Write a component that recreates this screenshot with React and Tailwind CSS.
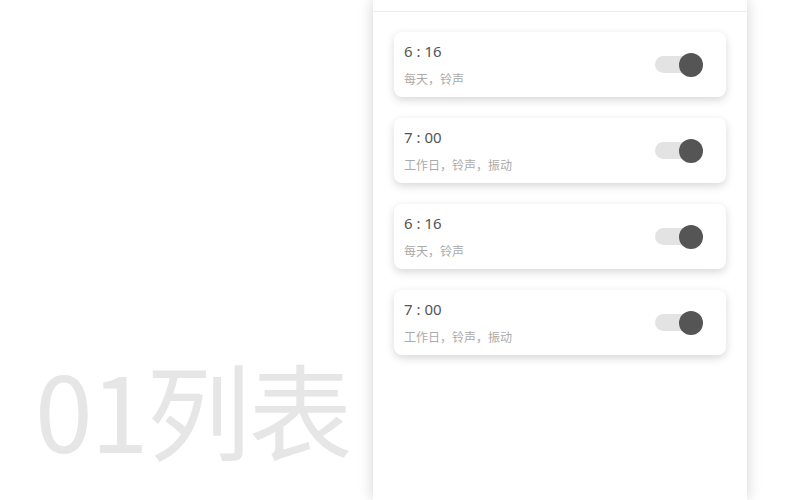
const alarms = [
  { time: '6 : 16', desc: '每天，铃声' },
  { time: '7 : 00', desc: '工作日，铃声，振动' },
  { time: '6 : 16', desc: '每天，铃声' },
  { time: '7 : 00', desc: '工作日，铃声，振动' },
];

function Toggle() {
  return (
    <div className="relative w-[48px] h-[24px] flex items-center">
      <div className="w-[40px] h-[17px] rounded-full bg-[#e3e3e3]" />
      <div className="absolute right-0 top-0 w-[24px] h-[24px] rounded-full bg-[#555555]" />
    </div>
  );
}

function AlarmCard({ time, desc }) {
  return (
    <div className="h-[65px] rounded-[8px] bg-white shadow-[0_3px_8px_rgba(0,0,0,0.16)] flex items-center justify-between pl-[10px] pr-[23px]">
      <div className="flex flex-col">
        <span className="text-[15px] leading-[20px] text-[#555555]">{time}</span>
        <span className="mt-[11px] text-[12px] leading-[16px] text-[#aaaaaa]">{desc}</span>
      </div>
      <Toggle />
    </div>
  );
}

export default function App() {
  return (
    <div
      className="w-[800px] h-[500px] bg-white flex overflow-hidden"
      style={{ fontFamily: '"Noto Sans", "Noto Sans CJK SC", sans-serif' }}
    >
      <div className="w-[373px] flex items-end pl-[35px] pb-[40px]">
        <h1 className="text-[104px] leading-none text-[#e6e6e6] tracking-[-2px]" style={{ fontFamily: '"Noto Sans CJK SC", sans-serif' }}>
          01列表
        </h1>
      </div>

      <div className="w-[374px] h-full bg-white shadow-[0_0_14px_rgba(0,0,0,0.18)] flex flex-col">
        <div className="h-[12px] border-b border-[#ececec]" />
        <div className="flex flex-col gap-[21px] pt-[20px] pl-[21px] pr-[21px]">
          {alarms.map((a, i) => (
            <AlarmCard key={i} time={a.time} desc={a.desc} />
          ))}
        </div>
      </div>
    </div>
  );
}
